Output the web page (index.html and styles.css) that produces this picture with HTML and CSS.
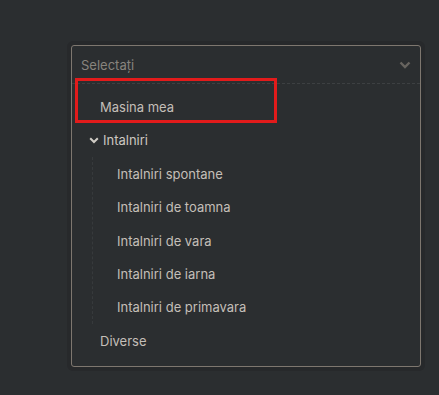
FILE: index.html
```html
<!DOCTYPE html>
<html lang="ro">

<head>
  <meta charset="UTF-8">
  <meta name="viewport" content="width=device-width, initial-scale=1.0">
  <title>Selectați</title>
  <link rel="stylesheet" href="styles.css">
</head>

<body>
  <div class="halo">
    <div class="select">
      <div class="select-head">
        <span class="placeholder">Selectați</span>
        <svg class="caret" width="12" height="8" viewBox="0 0 12 8">
          <path d="M1.5 1.5 L6 6 L10.5 1.5" fill="none" stroke="currentColor" stroke-width="2.4" />
        </svg>
      </div>

      <ul class="tree">
        <li class="node">Masina mea</li>
        <li class="node group">
          <svg class="twisty" width="10" height="7" viewBox="0 0 10 7">
            <path d="M1.2 1.2 L5 5 L8.8 1.2" fill="none" stroke="currentColor" stroke-width="2" />
          </svg>
          Intalniri
        </li>
        <li class="children">
          <ul>
            <li class="node child">Intalniri spontane</li>
            <li class="node child">Intalniri de toamna</li>
            <li class="node child">Intalniri de vara</li>
            <li class="node child">Intalniri de iarna</li>
            <li class="node child">Intalniri de primavara</li>
          </ul>
        </li>
        <li class="node">Diverse</li>
      </ul>
    </div>

    <!-- marcaj -->
    <div class="highlight"></div>
  </div>
</body>

</html>
```

FILE: styles.css
```css
* {
  margin: 0;
  padding: 0;
  box-sizing: border-box;
}

body {
  background: #2b2e30;
  font-family: Inter, "Noto Sans", sans-serif;
  font-size: 13px;
  color: #c4bfb8;
  padding: 41px 0 0 67px;
}

.halo {
  position: relative;
  width: 358px;
  padding: 4px;
  background: #27292b;
  border-radius: 6px;
}

.select {
  border: 1px solid #7e776f;
  border-radius: 3px;
  background: #2b2e30;
}

.select-head {
  display: flex;
  align-items: center;
  justify-content: space-between;
  height: 38px;
  padding: 0 9px 0 9px;
  border-bottom: 1px dashed #3d4042;
}

.placeholder {
  color: #88847e;
}

.caret {
  color: #67645f;
  margin-top: 1px;
}

.tree {
  list-style: none;
  padding: 6.3px 0 8.5px 0;
}

.tree ul {
  list-style: none;
}

.node {
  display: flex;
  align-items: center;
  height: 33.4px;
  padding-left: 28px;
}

.group {
  padding-left: 17px;
  gap: 4px;
  color: #cdc8c1;
}

.twisty {
  color: #d0ccc5;
}

.children {
  margin-left: 20px;
  border-left: 1px dashed #373a3c;
}

.child {
  padding-left: 24px;
}

.highlight {
  position: absolute;
  left: 8px;
  top: 37px;
  width: 202px;
  height: 45px;
  border: 3px solid #e21b1b;
}
```
